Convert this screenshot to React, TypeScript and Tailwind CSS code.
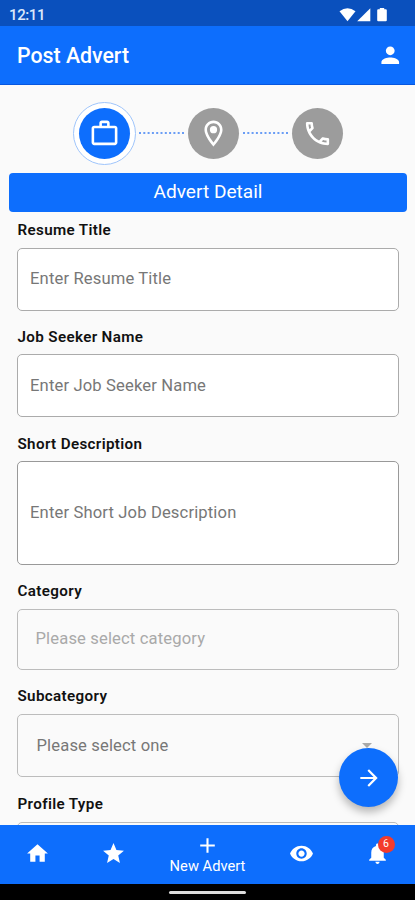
import type { ReactNode } from 'react';

function Icon({ d, className }: { d: string; className: string }) {
  return (
    <svg viewBox="0 0 24 24" fill="currentColor" className={`block shrink-0 ${className}`}>
      <path d={d} />
    </svg>
  );
}

const paths = {
  person: 'M12 12c2.21 0 4-1.79 4-4s-1.79-4-4-4-4 1.79-4 4 1.79 4 4 4zm0 2c-2.67 0-8 1.34-8 4v2h16v-2c0-2.66-5.33-4-8-4z',
  work: 'M14 6V4h-4v2h4zM4 8v11h16V8H4zm16-2c1.11 0 2 .89 2 2v11c0 1.11-.89 2-2 2H4c-1.11 0-2-.89-2-2l.01-11c0-1.11.88-2 1.99-2h4V4c0-1.11.89-2 2-2h4c1.11 0 2 .89 2 2v2h4z',
  place: 'M12 2C8.13 2 5 5.13 5 9c0 5.25 7 13 7 13s7-7.75 7-13c0-3.87-3.13-7-7-7zM7 9c0-2.76 2.24-5 5-5s5 2.24 5 5c0 2.88-2.88 7.19-5 9.88C9.92 16.21 7 11.85 7 9zM12 6.2a2.8 2.8 0 1 0 0 5.6 2.8 2.8 0 0 0 0-5.6z',
  phone: 'M6.54 5c.06.89.21 1.76.45 2.59l-1.2 1.2c-.41-1.2-.67-2.47-.76-3.79h1.51m9.86 12.02c.85.24 1.72.39 2.6.45v1.49c-1.32-.09-2.59-.35-3.8-.75l1.2-1.19M7.5 3H4c-.55 0-1 .45-1 1 0 9.39 7.61 17 17 17 .55 0 1-.45 1-1v-3.49c0-.55-.45-1-1-1-1.24 0-2.45-.2-3.57-.57-.1-.04-.21-.05-.31-.05-.26 0-.51.1-.71.29l-2.2 2.2c-2.83-1.45-5.15-3.76-6.59-6.59l2.2-2.2c.28-.28.36-.67.25-1.02C8.7 6.45 8.5 5.25 8.5 4c0-.55-.45-1-1-1z',
  arrow: 'M12 4l-1.41 1.41L16.17 11H4v2h12.17l-5.58 5.59L12 20l8-8z',
  home: 'M10 20v-6h4v6h5v-8h3L12 3 2 12h3v8z',
  star: 'M12 17.27L18.18 21l-1.64-7.03L22 9.24l-7.19-.61L12 2 9.19 8.63 2 9.24l5.46 4.73L5.82 21z',
  add: 'M19 13h-6v6h-2v-6H5v-2h6V5h2v6h6v2z',
  eye: 'M12 4.5C7 4.5 2.73 7.61 1 12c1.73 4.39 6 7.5 11 7.5s9.27-3.11 11-7.5c-1.73-4.39-6-7.5-11-7.5zM12 17c-2.76 0-5-2.24-5-5s2.24-5 5-5 5 2.24 5 5-2.24 5-5 5zm0-8c-1.66 0-3 1.34-3 3s1.34 3 3 3 3-1.34 3-3-1.34-3-3-3z',
  bell: 'M12 22c1.1 0 2-.9 2-2h-4c0 1.1.89 2 2 2zm6-6v-5c0-3.07-1.64-5.64-4.5-6.32V4c0-.83-.67-1.5-1.5-1.5s-1.5.67-1.5 1.5v.68C7.63 5.36 6 7.92 6 11v5l-2 2v1h16v-1l-2-2z',
};

function Dots() {
  return (
    <svg className="block h-[2px] w-[46px] shrink-0" viewBox="0 0 46 2">
      <line x1="0" y1="1" x2="46" y2="1" stroke="#6a9df5" strokeWidth="2" strokeDasharray="2 2.3" />
    </svg>
  );
}

function Step({ children }: { children: ReactNode }) {
  return (
    <div className="flex size-[51px] shrink-0 items-center justify-center rounded-full bg-[#9c9c9c] text-white">
      {children}
    </div>
  );
}

function Label({ children }: { children: ReactNode }) {
  return <div className="h-[18px] pl-[0.5px] text-[15.2px] font-semibold leading-[18px] tracking-[0.35px] text-[#111]">{children}</div>;
}

function Placeholder({ children }: { children: ReactNode }) {
  return <span className="pt-px text-[16.6px] tracking-[0.14px] text-[#777]">{children}</span>;
}

export default function App() {
  return (
    <div className="flex h-[900px] w-[415px] flex-col overflow-hidden bg-[#fafafa] font-['Roboto',sans-serif]">
      <div className="flex h-[25.5px] shrink-0 items-center justify-between bg-[#0a50bd] pl-[9px] pr-[28px] text-white">
        <span className="pt-[4px] text-[15px] font-medium tracking-[-0.4px] text-[#dce8fb]">12:11</span>
        <svg className="mt-[4px] block h-[16px] w-[48px]" viewBox="0 0 48 16" fill="white">
          <path d="M.5 4.2Q8.5-1.8 16.5 4.2L8.5 14.2z" />
          <path d="M31.3 1.3V14.2H18.2z" />
          <path d="M38.2 3.3q0-1 1-1h1.6V.9h4.4v1.4h1.6q1 0 1 1v9.9q0 1-1 1h-7.6q-1 0-1-1z" />
        </svg>
      </div>
      <header className="flex h-[59px] shrink-0 items-center justify-between border-b border-[#0757df] bg-[#0d6efd] pl-[17px] pr-[12px] text-white">
        <h1 className="pt-[3px] text-[21.3px] font-medium leading-6">Post Advert</h1>
        <Icon d={paths.person} className="mt-[2px] size-[26.5px]" />
      </header>

      <main className="flex min-h-0 flex-1 flex-col overflow-hidden">
        <div className="flex h-[88.5px] shrink-0 items-center pl-[72.5px] pt-[8.5px]">
          <div className="flex size-[63px] shrink-0 items-center justify-center rounded-full border border-[#9fc5fb] bg-white">
            <div className="flex size-[51px] items-center justify-center rounded-full bg-[#0d6efd] text-white">
              <Icon d={paths.work} className="size-[31px]" />
            </div>
          </div>
          <div className="pl-[3.5px] pr-[3px]"><Dots /></div>
          <Step><Icon d={paths.place} className="size-[31px]" /></Step>
          <div className="pl-[4px] pr-[3px]"><Dots /></div>
          <Step><Icon d={paths.phone} className="size-[31px]" /></Step>
        </div>

        <div className="mx-[9px] mr-[8px] flex h-[38.5px] shrink-0 items-center justify-center rounded-[4px] bg-[#0d6efd] pt-px text-[19.1px] text-white">
          Advert Detail
        </div>

        <form className="flex flex-col pl-[17px] pr-[16px] pt-[9.5px]">
          <Label>Resume Title</Label>
          <div className="mt-[8.5px] flex h-[63px] items-center rounded-[5px] border border-[#ababab] bg-white pl-[12px]">
            <Placeholder>Enter Resume Title</Placeholder>
          </div>
          <div className="h-[17.5px]" />
          <Label>Job Seeker Name</Label>
          <div className="mt-[8px] flex h-[63px] items-center rounded-[5px] border border-[#ababab] bg-white pl-[12px]">
            <Placeholder>Enter Job Seeker Name</Placeholder>
          </div>
          <div className="h-[17.5px]" />
          <Label>Short Description</Label>
          <div className="mt-[8.5px] flex h-[103.5px] items-center rounded-[5px] border border-[#999] bg-white pl-[12px]">
            <Placeholder>Enter Short Job Description</Placeholder>
          </div>
          <div className="h-[17px]" />
          <Label>Category</Label>
          <div className="mt-[9px] flex h-[61.5px] items-center rounded-[5px] border border-[#bcbcbc] pl-[17.5px]">
            <span className="pt-px text-[16.6px] tracking-[0.14px] text-[#a9a9a9]">Please select category</span>
          </div>
          <div className="h-[17px]" />
          <Label>Subcategory</Label>
          <div className="mt-[9px] flex h-[63px] items-center justify-between rounded-[5px] border border-[#bcbcbc] pl-[18.5px] pr-[26px]">
            <Placeholder>Please select one</Placeholder>
            <svg className="block h-[5px] w-[10px]" viewBox="0 0 10 5" fill="#aaa"><path d="M0 0h10L5 5z" /></svg>
          </div>
          <div className="h-[17.5px]" />
          <Label>Profile Type</Label>
          <div className="mt-[9px] h-[63px] rounded-[5px] border border-[#bcbcbc]" />
        </form>
      </main>

      <button className="absolute left-[339px] top-[748px] flex size-[59px] items-center justify-center rounded-full bg-[#0d6efd] text-white shadow-[0_5px_8px_rgba(0,0,0,0.28)]">
        <Icon d={paths.arrow} className="size-[26px]" />
      </button>

      <nav className="z-10 grid h-[59px] shrink-0 grid-cols-[75.5px_76px_112px_76px_75.5px] items-center bg-[#0d6efd] text-white">
        <div className="flex justify-center pb-[2px]"><Icon d={paths.home} className="size-[25px]" /></div>
        <div className="flex justify-center pb-[2px]"><Icon d={paths.star} className="size-[25px]" /></div>
        <div className="flex flex-col items-center">
          <Icon d={paths.add} className="-mt-px size-[25px]" />
          <span className="whitespace-nowrap text-[14.7px] leading-[17px]">New Advert</span>
        </div>
        <div className="flex justify-center pb-[2px]"><Icon d={paths.eye} className="size-[25px]" /></div>
        <div className="relative flex justify-center pb-[2px]">
          <Icon d={paths.bell} className="size-[25px]" />
          <span className="absolute left-[38px] top-[-5px] flex size-[17px] items-center justify-center rounded-full bg-[#f33b2c] text-[10.5px]">6</span>
        </div>
      </nav>
      <div className="z-10 flex h-[16.5px] shrink-0 justify-center bg-black pt-[7px]">
        <div className="h-[3px] w-[77px] rounded-full bg-[#ddd]" />
      </div>
    </div>
  );
}
